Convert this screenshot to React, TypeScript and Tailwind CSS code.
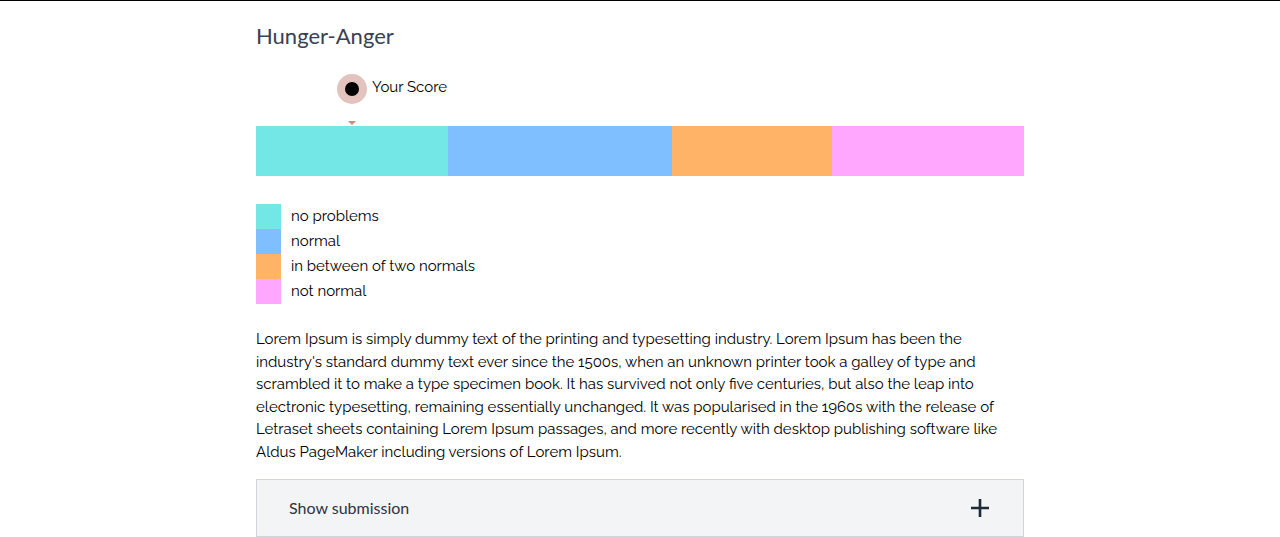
import React from "react";

const segments = [
  { color: "bg-[#72e7e5]", w: "w-[192px]", label: "no problems" },
  { color: "bg-[#80bfff]", w: "w-[224px]", label: "normal" },
  { color: "bg-[#ffb366]", w: "w-[160px]", label: "in between of two normals" },
  { color: "bg-[#ffa6ff]", w: "w-[192px]", label: "not normal" },
];

export default function App() {
  return (
    <div className="min-h-[537px] bg-white border-t border-black">
      <div className="mx-auto w-[768px]">
        <h2 className="pt-[20px] text-[22px] leading-[30px] text-[#374151] [font-family:Lato,sans-serif]">
          Hunger-Anger
        </h2>
        <div className="relative mt-[25px] h-[50px]">
          <div className="absolute left-[81px] top-[-2px] flex items-start">
            <div className="flex h-[30px] w-[30px] items-center justify-center rounded-full bg-[#e2c3bd]">
              <div className="h-[14px] w-[14px] rounded-full bg-black" />
            </div>
            <span className="ml-[5px] mt-[2px] text-[15px] leading-[22px] text-black [font-family:Raleway,'Open_Sans',sans-serif]">
              Your Score
            </span>
          </div>
          <div className="absolute left-[92px] top-[45px] h-0 w-0 border-x-[4px] border-t-[4px] border-x-transparent border-t-[#d4887a]" />
        </div>
        <div className="flex h-[50px]">
          {segments.map((s) => (
            <div key={s.label} className={`${s.color} ${s.w} h-full`} />
          ))}
        </div>
        <div className="mt-[28px] flex flex-col">
          {segments.map((s) => (
            <div key={s.label} className="flex h-[25px] items-center">
              <div className={`${s.color} h-[25px] w-[25px]`} />
              <span className="ml-[10px] text-[15px] text-black [font-family:Raleway,'Open_Sans',sans-serif]">
                {s.label}
              </span>
            </div>
          ))}
        </div>
        <p className="mt-[24px] text-[15px] leading-[22.6px] text-black [font-family:Raleway,'Open_Sans',sans-serif]">
          Lorem Ipsum is simply dummy text of the printing and typesetting industry. Lorem Ipsum has been the
          industry's standard dummy text ever since the 1500s, when an unknown printer took a galley of type and
          scrambled it to make a type specimen book. It has survived not only five centuries, but also the leap into
          electronic typesetting, remaining essentially unchanged. It was popularised in the 1960s with the release of
          Letraset sheets containing Lorem Ipsum passages, and more recently with desktop publishing software like
          Aldus PageMaker including versions of Lorem Ipsum.
        </p>
        <div className="mt-[15px] flex h-[58px] items-center justify-between border border-[#d1d5db] bg-[#f3f4f6] pl-[32px] pr-[32px]">
          <span className="text-[16px] text-[#2d3340] [font-family:Lato,sans-serif]">Show submission</span>
          <svg width="20" height="20" viewBox="0 0 20 20" className="mr-[1px]">
            <path d="M10 1v18M1 10h18" stroke="#1f2937" strokeWidth="2.6" />
          </svg>
        </div>
      </div>
    </div>
  );
}
